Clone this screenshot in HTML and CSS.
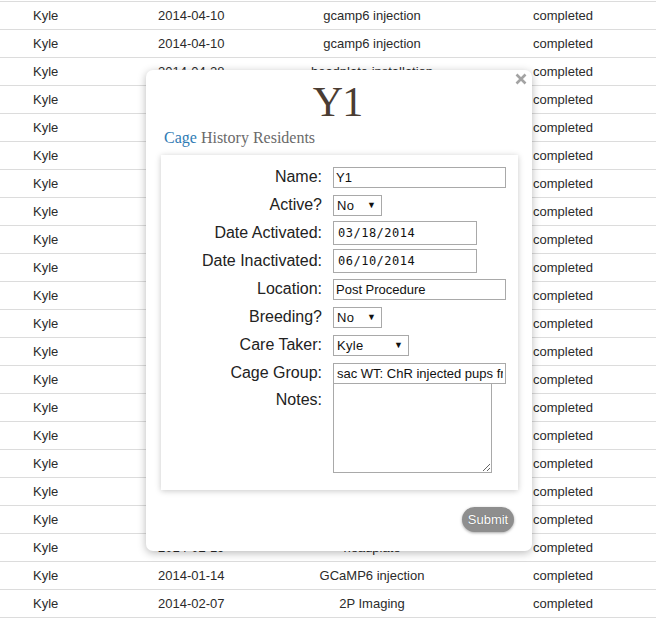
FILE: index.html
```html
<!DOCTYPE html>
<html>
<head>
<meta charset="utf-8">
<link rel="stylesheet" href="styles.css">
</head>
<body>
<div class="table">
  <div class="row"><span class="c1">Kyle</span><span class="c2">2014-04-10</span><span class="c3">gcamp6 injection</span><span class="c4">completed</span></div>
  <div class="row"><span class="c1">Kyle</span><span class="c2">2014-04-10</span><span class="c3">gcamp6 injection</span><span class="c4">completed</span></div>
  <div class="row"><span class="c1">Kyle</span><span class="c2">2014-04-28</span><span class="c3">headplate installation</span><span class="c4">completed</span></div>
  <div class="row"><span class="c1">Kyle</span><span class="c2">2014-04-28</span><span class="c3">headplate installation</span><span class="c4">completed</span></div>
  <div class="row"><span class="c1">Kyle</span><span class="c2">2014-05-02</span><span class="c3">2P Imaging</span><span class="c4">completed</span></div>
  <div class="row"><span class="c1">Kyle</span><span class="c2">2014-05-02</span><span class="c3">2P Imaging</span><span class="c4">completed</span></div>
  <div class="row"><span class="c1">Kyle</span><span class="c2">2014-05-09</span><span class="c3">2P Imaging</span><span class="c4">completed</span></div>
  <div class="row"><span class="c1">Kyle</span><span class="c2">2014-05-09</span><span class="c3">2P Imaging</span><span class="c4">completed</span></div>
  <div class="row"><span class="c1">Kyle</span><span class="c2">2014-05-16</span><span class="c3">2P Imaging</span><span class="c4">completed</span></div>
  <div class="row"><span class="c1">Kyle</span><span class="c2">2014-05-16</span><span class="c3">2P Imaging</span><span class="c4">completed</span></div>
  <div class="row"><span class="c1">Kyle</span><span class="c2">2014-05-23</span><span class="c3">2P Imaging</span><span class="c4">completed</span></div>
  <div class="row"><span class="c1">Kyle</span><span class="c2">2014-05-23</span><span class="c3">2P Imaging</span><span class="c4">completed</span></div>
  <div class="row"><span class="c1">Kyle</span><span class="c2">2014-05-30</span><span class="c3">2P Imaging</span><span class="c4">completed</span></div>
  <div class="row"><span class="c1">Kyle</span><span class="c2">2014-05-30</span><span class="c3">2P Imaging</span><span class="c4">completed</span></div>
  <div class="row"><span class="c1">Kyle</span><span class="c2">2014-06-06</span><span class="c3">2P Imaging</span><span class="c4">completed</span></div>
  <div class="row"><span class="c1">Kyle</span><span class="c2">2014-06-06</span><span class="c3">2P Imaging</span><span class="c4">completed</span></div>
  <div class="row"><span class="c1">Kyle</span><span class="c2">2014-06-10</span><span class="c3">sacrifice</span><span class="c4">completed</span></div>
  <div class="row"><span class="c1">Kyle</span><span class="c2">2014-06-10</span><span class="c3">sacrifice</span><span class="c4">completed</span></div>
  <div class="row"><span class="c1">Kyle</span><span class="c2">2014-01-14</span><span class="c3">GCaMP6 injection</span><span class="c4">completed</span></div>
  <div class="row"><span class="c1">Kyle</span><span class="c2">2014-02-19</span><span class="c3">headplate</span><span class="c4">completed</span></div>
  <div class="row"><span class="c1">Kyle</span><span class="c2">2014-01-14</span><span class="c3">GCaMP6 injection</span><span class="c4">completed</span></div>
  <div class="row"><span class="c1">Kyle</span><span class="c2">2014-02-07</span><span class="c3">2P Imaging</span><span class="c4">completed</span></div>
</div>

<div class="modal">
  <button class="close" type="button" aria-label="Close">
    <svg width="12" height="12" viewBox="0 0 12 12"><path d="M1.5 1.5 L10.5 10.5 M10.5 1.5 L1.5 10.5" stroke="#a3a3a3" stroke-width="2.6" stroke-linecap="butt"/></svg>
  </button>
  <h1 class="title">Y1</h1>
  <div class="tabs"><span class="tab active">Cage</span> <span class="tab">History</span> <span class="tab">Residents</span></div>
  <div class="panel">
    <form class="form">
      <label class="lbl">Name:</label>
      <input class="inp wide" type="text" value="Y1">
      <label class="lbl">Active?</label>
      <span class="sel small"><select><option>No</option></select></span>
      <label class="lbl">Date Activated:</label>
      <input class="inp date" type="text" value="03/18/2014">
      <label class="lbl">Date Inactivated:</label>
      <input class="inp date" type="text" value="06/10/2014">
      <label class="lbl">Location:</label>
      <input class="inp wide" type="text" value="Post Procedure">
      <label class="lbl">Breeding?</label>
      <span class="sel small"><select><option>No</option></select></span>
      <label class="lbl">Care Taker:</label>
      <span class="sel med"><select><option>Kyle</option></select></span>
      <label class="lbl">Cage Group:</label>
      <input class="inp wide group" type="text" value="sac WT: ChR injected pups from Y1">
      <label class="lbl notes-lbl">Notes:</label>
      <textarea class="notes"></textarea>
    </form>
  </div>
  <button class="submit" type="button">Submit</button>
</div>
</body>
</html>
```

FILE: styles.css
```css
html, body {
  margin: 0;
  padding: 0;
  background: #fff;
}
body {
  font-family: "Liberation Sans", Arial, sans-serif;
  color: #333;
  width: 656px;
  height: 625px;
  overflow: hidden;
  position: relative;
}
.table {
  padding-top: 1px;
}
.row {
  display: grid;
  grid-template-columns: 158px 130px 168px 1fr;
  height: 27px;
  border-top: 1px solid #dcdcdc;
  align-items: center;
  font-size: 13px;
  color: #2b2b2b;
}
.row:last-child {
  border-bottom: 1px solid #dcdcdc;
}
.c1 {
  padding-left: 33px;
}
.c3 {
  text-align: center;
}
.c4 {
  padding-left: 77px;
}

.modal {
  position: absolute;
  left: 146px;
  top: 70px;
  width: 386px;
  height: 481px;
  box-sizing: border-box;
  background: #fff;
  border-radius: 7px;
  box-shadow: 0 2px 8px rgba(0, 0, 0, 0.28);
  padding: 0 18px 0 15px;
  display: flex;
  flex-direction: column;
}
.close {
  position: absolute;
  top: 3px;
  right: 5px;
  border: 0;
  background: transparent;
  padding: 0;
  width: 12px;
  height: 12px;
  line-height: 0;
}
.title {
  margin: 11px 0 0;
  font-family: "Liberation Serif", "Times New Roman", serif;
  font-weight: normal;
  font-size: 42px;
  line-height: 42px;
  letter-spacing: -1px;
  color: #4b3d33;
  text-align: center;
}
.tabs {
  margin: 5px 0 0 3px;
  font-family: "Liberation Serif", "Times New Roman", serif;
  font-size: 16px;
  line-height: 20px;
  color: #6a6a6a;
}
.tab.active {
  color: #2f7bb4;
}
.panel {
  margin-top: 7px;
  width: 357px;
  height: 335px;
  background: #fff;
  box-shadow: 0 1px 6px rgba(0, 0, 0, 0.22);
  box-sizing: border-box;
}
.form {
  display: grid;
  grid-template-columns: 161px auto;
  grid-auto-rows: 28px;
  column-gap: 11px;
  align-items: center;
  justify-items: start;
  padding-top: 8px;
  margin: 0;
}
.lbl {
  justify-self: end;
  font-size: 16px;
  color: #222;
}
.inp {
  box-sizing: border-box;
  height: 21px;
  border: 1px solid #a9a9a9;
  padding: 0 2px;
  font-family: "Liberation Sans", Arial, sans-serif;
  font-size: 13px;
  color: #111;
  background: #fff;
  outline: none;
}
.wide {
  width: 173px;
}
.group {
  padding-left: 3px;
}
.date {
  width: 144px;
  height: 24px;
  padding-left: 4px;
  font-family: "DejaVu Sans Mono", "Liberation Mono", monospace;
  font-size: 12px;
  letter-spacing: 0.5px;
}
.sel {
  position: relative;
  display: inline-block;
  height: 21px;
}
.sel select {
  -webkit-appearance: none;
  appearance: none;
  box-sizing: border-box;
  width: 100%;
  height: 21px;
  border: 1px solid #a9a9a9;
  border-radius: 0;
  background: #fff;
  padding: 0 0 0 3px;
  font-family: "Liberation Sans", Arial, sans-serif;
  font-size: 13px;
  letter-spacing: 0.3px;
  color: #111;
  outline: none;
}
.sel::after {
  content: "\25BC";
  position: absolute;
  right: 6px;
  top: 5px;
  font-size: 9px;
  line-height: 10px;
  color: #111;
  pointer-events: none;
}
.small {
  width: 49px;
}
.med {
  width: 76px;
}
.notes-lbl {
  align-self: start;
  margin-top: 4px;
}
.notes {
  box-sizing: border-box;
  width: 159px;
  height: 90px;
  border: 1px solid #a9a9a9;
  margin: -4px 0 0;
  grid-row: span 4;
  align-self: start;
  font-family: "Liberation Mono", monospace;
}
.submit {
  align-self: flex-end;
  margin-top: 17px;
  width: 52px;
  height: 25px;
  border: 0;
  border-radius: 13px;
  background: #8e8e8e;
  color: #fff;
  font-family: "Liberation Sans", Arial, sans-serif;
  font-size: 13px;
  text-shadow: 0 0 1px rgba(0, 0, 0, 0.4);
  box-shadow: 0 1px 3px rgba(0, 0, 0, 0.35);
  padding: 0;
}
```
